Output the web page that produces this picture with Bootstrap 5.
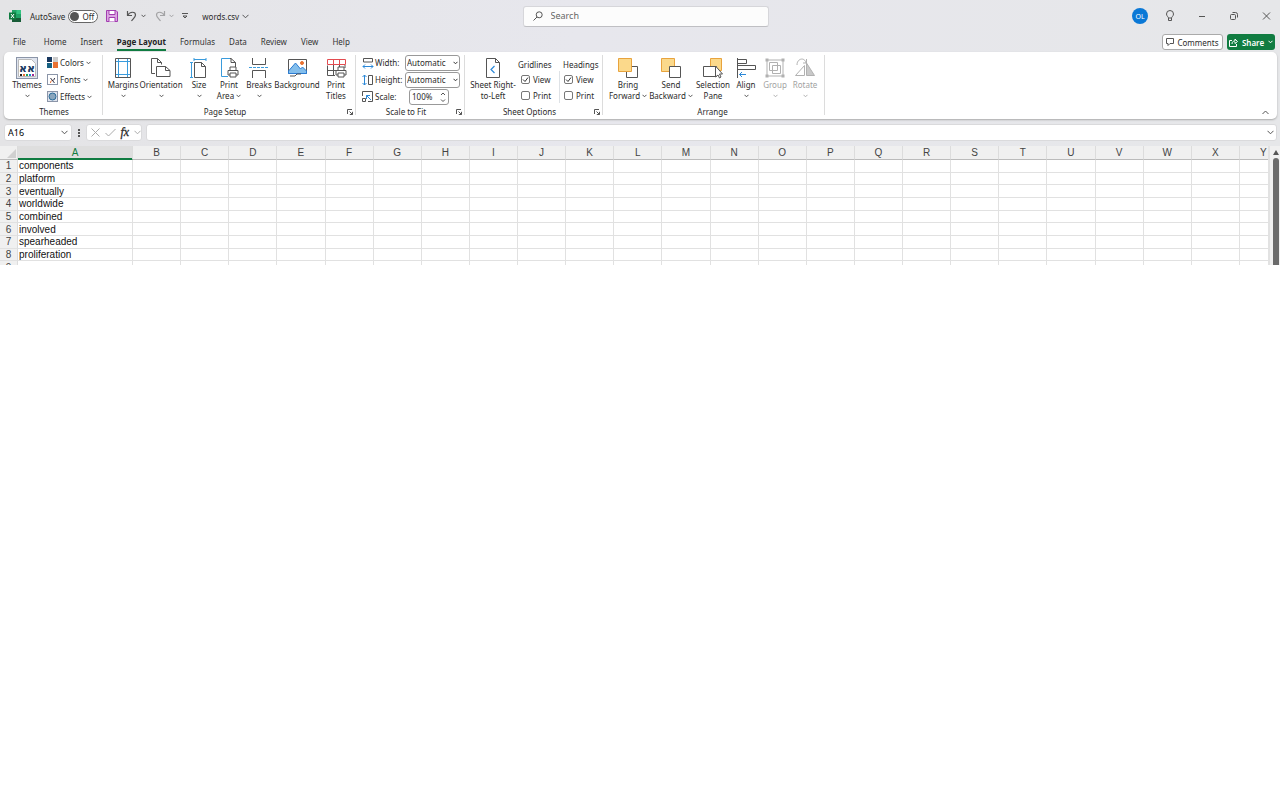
<!DOCTYPE html>
<html lang="en">
<head>
<meta charset="utf-8">
<meta name="viewport" content="width=device-width, initial-scale=1">
<title>words.csv</title>
<link rel="stylesheet" href="https://cdn.jsdelivr.net/npm/bootstrap@5.3.0/dist/css/bootstrap.min.css">
<style>
:root{--ink:#2b2b2b;--green:#107c41;--line:#e1e1e1}
body{font-family:"Noto Sans","Open Sans",sans-serif;font-size:8px;line-height:11px;color:var(--ink);background:#fff}
button{border:0;background:none;padding:0;color:inherit;font:inherit}
svg{display:block;fill:none;stroke:#555;stroke-width:1;flex:none}
.solid{stroke:none}
.pale{stroke:#aaa}
.window-frame{background:linear-gradient(90deg,#e4e4e6,#e7e7ed 45%,#e6e7e9)}
.title-bar{height:32px}
.title-side{flex:1 1 0}
.quick{padding-left:9px;gap:8px}
.save-label{padding-left:1px}
.save-switch{width:30px;height:13px;border:1px solid #666;border-radius:7px;background:#fff;padding:0 3px 0 1px;margin-left:-5px}
.save-switch i{width:9px;height:9px;border-radius:50%;background:#555}
.drop{gap:3px}
.doc-name{margin-left:6px;gap:3px}
.search-box{width:246px;height:21px;background:#fcfcfc;border:1px solid #d6d6da;border-bottom-color:#bfbfc3;border-radius:3px;padding:0 9px;margin-left:10px}
.search-box input{border:0;background:none;font-size:9px;line-height:12px;outline:0;padding:0}
.search-box input::placeholder{color:#666;opacity:1}
.win-tools{gap:20px;padding-right:8px}
.avatar{width:16px;height:16px;border-radius:50%;background:#0a78d6;color:#fff;font-size:7px;margin-right:-4px}
.tab-bar{height:20px;padding:0 5px 0 13px}
.tabs{gap:14px}
.tabs a:first-child{margin-right:4px}
.tab-bar a{color:#333;text-decoration:none;line-height:14px;border-bottom:2px solid transparent;padding-top:1px}
.tab-bar a.current{font-weight:700;border-color:var(--green);color:#222}
.comments{height:16px;width:61px;background:#fff;border:1px solid #aaa;border-radius:3px;gap:3px}
.share{height:16px;width:48px;background:var(--green);color:#fff;border-radius:3px;font-weight:600}
.share svg{stroke:#fff}
.ribbon{margin:0 3px 0 4px;height:67px;background:#fff;border-radius:5px;box-shadow:0 1px 2px #aaa}
.group{padding-top:2px}
.group-body{height:52px}
.group-foot{height:11px;padding-right:2px}
.g-themes{width:98px}.g-setup{width:252px}.g-scale{width:108px}.g-sheet{width:137px}.g-arrange{width:221px}
.g-themes .group-body,.g-scale .group-body{padding-left:6px;gap:3px}
.g-themes .group-foot{padding-left:4px}
.g-setup .group-body{padding-left:4px}
.rule{width:1px;height:60px;margin-top:3px;background:#dcdcdc}
.big{text-align:center;display:flex;flex-direction:column;align-items:center;white-space:nowrap;padding-top:3px}
.big svg.ico{width:22px;height:22px}
.big .chev{margin:4px auto 0}
.chev-in{display:inline-block;margin:0 0 1px 2px}
.w26{width:26px}.w28{width:28px}.w32{width:32px}.w34{width:34px}.w40{width:40px}.w42{width:42px}.w44{width:44px}.w48{width:48px}
.aleph{font:700 11px "DejaVu Sans",sans-serif;fill:#17375e;stroke:none}
.faded{opacity:.45}
.small-row{height:17px;gap:2px}
.scale-row{height:17px;gap:1px}
.scale-row label{width:29px}
.field{height:16px;border:1px solid #999;border-radius:3px;background:#fff;font-size:8px;line-height:12px;color:var(--ink);padding:0 1px}
select.field{width:55px;appearance:none;background:#fff url("data:image/svg+xml,%3Csvg xmlns='http://www.w3.org/2000/svg' width='5' height='4' fill='none' stroke='%23333'%3E%3Cpath d='M.5.8l2 2 2-2'/%3E%3C/svg%3E") no-repeat right 1px center}
.spin{width:40px;margin-left:4px;padding-left:2px}
.spin input{width:28px;border:0;padding:0;outline:0;font-size:8px;line-height:12px;color:inherit}
.tick-head{padding-top:5px;padding-left:1px;margin-bottom:1px}
.tick{height:16px;gap:3px}
.tick input{appearance:none;width:9px;height:9px;margin:0;border:1px solid #777;border-radius:2px;background:#fff}
.tick input:checked{background:#fff url("data:image/svg+xml,%3Csvg xmlns='http://www.w3.org/2000/svg' width='7' height='7' fill='none' stroke='%23333'%3E%3Cpath d='M1 3.5l2 2 3-4'/%3E%3C/svg%3E") center no-repeat}
.formula-row{padding:5px 3px 5px 4px;height:27px;gap:4px}
.cellbox{height:17px;background:#fff;border:1px solid #dadadc;border-radius:3px}
.name-box{width:68px;padding:0 3px}
.name-box input,.entry input{border:0;outline:0;padding:0;background:none;font-size:9px;line-height:12px;min-width:0}
.entry{padding:0 2px}
.fn{width:56px}
.fx{font-family:"Liberation Serif",serif;font-style:italic;font-size:12px;-webkit-text-stroke:.3px}
.sheet{height:119px;background:#fff}
.sheet-view{overflow:hidden;height:119px}
.cells{table-layout:fixed;border-collapse:separate;border-spacing:0;width:calc(100% + 20px);height:128px;font-family:"Liberation Sans",sans-serif;font-size:10px;line-height:11px;color:#111}
.cells th{font-weight:400;text-align:center;background:#f0f0f0;color:#444;padding:0;border-right:1px solid #dcdcdc;border-bottom:1px solid var(--line)}
.cells thead th{height:14px;border-bottom-color:#bbb;line-height:12px;padding-top:1px}
.cells thead th.picked{background:#dedede;color:var(--green);box-shadow:inset 0 -1px var(--green);border-bottom-color:var(--green)}
.cells td{padding:0 1px;border-right:1px solid var(--line);border-bottom:1px solid var(--line);white-space:nowrap}
.col-head{width:18px}.col-a{width:115px}
.corner svg{margin-left:7px}
.scroller{width:12px;background:#f0f0f0;border-left:2px solid #e2e2e2;padding:4px 1px 0 3px}
.scroller i{width:6px;background:#6b6b6b;border-radius:3px 3px 0 0;margin-top:3px}
</style>
</head>
<body>
<svg width="0" height="0" class="position-absolute" aria-hidden="true">
  <symbol id="down" viewBox="0 0 5 4"><path d="M.5.8l2 2 2-2"/></symbol>
  <symbol id="down-wide" viewBox="0 0 7 5"><path d="M.5.8l3 3 3-3"/></symbol>
  <symbol id="launch" viewBox="0 0 6 6"><path d="M.5 5V.5H5M2.5 2.5l3 3M5.5 2.8v2.7H2.8"/></symbol>
  <symbol id="printer" viewBox="0 0 12 12"><path fill="#fff" d="M3 4V1h6v3M3 9H1V4.5h10V9H9M3 7h6v4H3z"/></symbol>
</svg>
<div class="window-frame">
  <header class="title-bar d-flex align-items-center">
    <div class="title-side quick d-flex align-items-center">
      <svg class="solid" width="12" height="12" viewBox="0 0 12 12"><path fill="#21a366" d="M3 0h9v12H3z"/><path fill="#33c481" d="M7.5 0H12v4H7.5z"/><path fill="#185c37" d="M3 8h9v4H3z"/><path fill="#107c41" d="M0 2.500h7v7H0z"/><path stroke="#fff" d="M2 4l3 4M5 4L2 8"/></svg>
      <span class="save-label">AutoSave</span>
      <button class="save-switch d-flex align-items-center justify-content-between" aria-label="AutoSave"><i></i><span>Off</span></button>
      <button aria-label="Save"><svg width="12" height="12" viewBox="0 0 12 12"><g stroke="#a23db0"><path fill="#dca6e2" d="M.5.5H10l1.500 1.500v9.500H.5z"/><path fill="#fff" d="M3 .5h6v4H3zM3 11.500v-4h6v4"/></g></svg></button>
      <button class="drop d-flex align-items-center" aria-label="Undo"><svg width="12" height="12" viewBox="0 0 12 12"><path stroke-width="1.200" d="M1.500 1v4.500H6M1.500 5.500C4 1 9.500 1.500 9.500 5c0 2-2 3.500-4 6"/></svg><svg width="5" height="4"><use href="#down"/></svg></button>
      <button class="drop d-flex align-items-center faded" aria-label="Redo"><svg width="12" height="12" viewBox="0 0 12 12"><path stroke-width="1.200" d="M10.500 1v4.500H6M10.500 5.500C8 1 2.500 1.500 2.500 5c0 2 2 3.500 4 6"/></svg><svg width="5" height="4"><use href="#down"/></svg></button>
      <button aria-label="Customize toolbar"><svg width="6" height="6" viewBox="0 0 6 6"><path d="M0 .5h6M1 3l2 2 2-2z"/></svg></button>
      <button class="doc-name d-flex align-items-center">words.csv<svg width="7" height="5"><use href="#down-wide"/></svg></button>
    </div>
    <label class="search-box d-flex align-items-center gap-2"><svg width="10" height="10" viewBox="0 0 10 10"><circle cx="6.200" cy="3.800" r="3"/><path d="M4 6L.5 9.500"/></svg><input type="search" placeholder="Search" aria-label="Search"></label>
    <div class="title-side win-tools d-flex align-items-center justify-content-end">
      <span class="avatar d-flex align-items-center justify-content-center">OL</span>
      <button aria-label="Tips"><svg width="12" height="14" viewBox="1 0 12 14"><path d="M5.500 9C5.500 8 3.500 7 3.500 5a3.500 3.500 0 0 1 7 0C10.500 7 8.500 8 8.500 9zM5.500 9v2.500h3V9"/></svg></button>
      <button aria-label="Minimize"><svg width="12" height="10" viewBox="0 0 12 10"><path d="M3 5.500h6"/></svg></button>
      <button aria-label="Restore"><svg width="12" height="10" viewBox="0 0 12 10"><rect x="2.500" y="3.500" width="5" height="5" rx="1"/><path d="M4.500 1.500h3q2 0 2 2v3"/></svg></button>
      <button aria-label="Close"><svg width="12" height="10" viewBox="0 0 12 10"><path d="M3 1.500l7 7M10 1.500l-7 7"/></svg></button>
    </div>
  </header>

  <nav class="tab-bar d-flex align-items-center">
    <div class="d-flex flex-grow-1 tabs">
      <a href="#">File</a><a href="#">Home</a><a href="#">Insert</a><a href="#" class="current">Page Layout</a><a href="#">Formulas</a><a href="#">Data</a><a href="#">Review</a><a href="#">View</a><a href="#">Help</a>
    </div>
    <button class="comments d-flex align-items-center justify-content-center"><svg width="8" height="8" viewBox="0 0 8 8"><path d="M.5.5h7v5H4l-2 2v-2H.5z"/></svg>Comments</button>
    <button class="share d-flex align-items-center justify-content-center ms-1"><svg width="9" height="9" viewBox="0 0 9 9"><path d="M3 2.500H.5v6h7V6M3 6c0-2 1-3 3-3V1l2.500 2.500L6 5.500V4"/></svg><span class="mx-1">Share</span><svg width="5" height="4"><use href="#down"/></svg></button>
  </nav>

  <section class="ribbon d-flex">
    <div class="group g-themes">
      <div class="group-body d-flex">
        <button class="big w34"><svg class="ico" viewBox="0 0 22 22"><rect x=".5" y=".5" width="21" height="21" fill="#dfe4ee" stroke="#8b95a8"/><path d="M2.500 2.500h13l4 4v13h-17z" fill="#fff" stroke="#bbb"/><text class="aleph" x="3" y="15">אא</text><path d="M4 18h2" stroke="#222" stroke-width="2"/><path d="M7 18h2" stroke="#e97132" stroke-width="2"/><path d="M10 18h2" stroke="#19a35b" stroke-width="2"/><path d="M13 18h2" stroke="#1587d4" stroke-width="2"/><path d="M16 18h2" stroke="#a02b93" stroke-width="2"/></svg>Themes<svg class="chev" width="5" height="4"><use href="#down"/></svg></button>
        <div>
          <button class="small-row d-flex align-items-center"><svg class="solid" width="11" height="11" viewBox="0 0 11 11"><path fill="#17375e" d="M0 0h5v5H0z"/><path fill="#ccc" d="M6 0h5v5H6z"/><path fill="#156082" d="M0 6h5v5H0z"/><path fill="#e97132" d="M6 5h5v6H6z"/></svg><span>Colors<svg class="chev-in" width="5" height="4"><use href="#down"/></svg></span></button>
          <button class="small-row d-flex align-items-center"><svg width="11" height="11" viewBox="0 0 11 11"><rect x=".5" y=".5" width="10" height="10" stroke="#8b95a8"/><path d="M3.500 4l4 5M7.500 4c0 2-1 2-2 2.500" stroke="#334"/><path d="M5 6.500c-1 .5-1.500 1-1.500 2.500" stroke="#e97132"/></svg><span>Fonts<svg class="chev-in" width="5" height="4"><use href="#down"/></svg></span></button>
          <button class="small-row d-flex align-items-center"><svg width="11" height="11" viewBox="0 0 11 11"><rect x=".5" y=".5" width="10" height="10" fill="#dfe4ee" stroke="#8b95a8"/><circle cx="5.500" cy="5.500" r="3.500" fill="#8aa6bd" stroke="#2b6c99"/></svg><span>Effects<svg class="chev-in" width="5" height="4"><use href="#down"/></svg></span></button>
        </div>
      </div>
      <div class="group-foot text-center">Themes</div>
    </div>
    <div class="rule"></div>

    <div class="group g-setup">
      <div class="group-body d-flex">
        <button class="big w32"><svg class="ico" viewBox="0 0 22 22"><path d="M3.500 1.500h15v19h-15z"/><path stroke="#3a9bdc" d="M6.500 2v18M15.500 2v18M4 4.500h14M4 17.500h14"/></svg>Margins<svg class="chev" width="5" height="4"><use href="#down"/></svg></button>
        <button class="big w44"><svg class="ico" viewBox="0 0 22 22"><path d="M5 16.500H1.500v-15h6l4 4v2M7.500 1.500v4h4M6.500 9.500h9l4.500 4v6H6.500zM15.500 9.500v4H20"/></svg>Orientation<svg class="chev" width="5" height="4"><use href="#down"/></svg></button>
        <button class="big w32"><svg class="ico" viewBox="0 0 22 22"><path d="M6.500 5.500h7l4 4v11h-11zM13.500 5.500v4h4"/><path stroke="#3a9bdc" d="M6 2.500h12M6 1v3M18 1v3M3.500 5v16M2 5.500h3M2 20.500h3"/></svg>Size<svg class="chev" width="5" height="4"><use href="#down"/></svg></button>
        <button class="big w28"><svg class="ico" viewBox="0 0 22 22"><path d="M5 1.500h8l4.500 4v5M13 1.500v4h4.500"/><path stroke="#3a9bdc" d="M12 1.500H3.500v18H10"/><use href="#printer" x="9" y="9" width="12" height="12"/></svg>Print<span>Area<svg class="chev-in" width="5" height="4"><use href="#down"/></svg></span></button>
        <button class="big w32"><svg class="ico" viewBox="0 0 22 22"><path d="M4.500 1v6.500h13V1M4.500 21v-7.500h13V21"/><path stroke="#3a9bdc" d="M1 10.500h20" stroke-dasharray="3 1"/></svg>Breaks<svg class="chev" width="5" height="4"><use href="#down"/></svg></button>
        <button class="big w44"><svg class="ico" viewBox="0 0 22 22"><path fill="#fff" d="M2.500 2.500h18v14h-18z"/><path fill="#83beec" stroke="#2b7cd3" d="M2.500 14l7-8 5 6 2-2 4 4v2.500h-18z"/><circle cx="16" cy="6" r="1.500" fill="#e97132" stroke="#e97132"/><path fill="#fff" d="M4 19h5l2-2h4"/></svg>Background</button>
        <button class="big w34"><svg class="ico" viewBox="0 0 22 22"><path d="M2.500 8.500v10H10M2.500 13.500H11M8.500 8v10M14.500 8v3M20 8v3"/><path stroke="#e34b50" fill="#fff" d="M2.500 2.500h18v5h-18zM8.500 3v5M14.500 3v5"/><use href="#printer" x="10" y="9" width="12" height="12"/></svg>Print<span>Titles</span></button>
      </div>
      <div class="group-foot d-flex"><span class="flex-grow-1 text-center">Page Setup</span><button aria-label="Page Setup options"><svg width="6" height="6"><use href="#launch"/></svg></button></div>
    </div>
    <div class="rule"></div>

    <div class="group g-scale">
      <div class="group-body">
        <div class="scale-row d-flex align-items-center"><svg width="12" height="12" viewBox="0 0 12 12"><path d="M1.500 4V1.500h9V5h-9z"/><path stroke="#2b88d8" d="M1 9.500h10M3 7.500l-2 2 2 2M9 7.500l2 2-2 2"/></svg><label for="wide">Width:</label><select id="wide" class="field"><option>Automatic</option></select></div>
        <div class="scale-row d-flex align-items-center"><svg width="12" height="12" viewBox="0 0 12 12"><path d="M6.500 1.500h4v9h-4z"/><path stroke="#2b88d8" d="M2.500 1v10M.5 3l2-2 2 2M.5 9l2 2 2-2"/></svg><label for="tall">Height:</label><select id="tall" class="field"><option>Automatic</option></select></div>
        <div class="scale-row d-flex align-items-center"><svg width="12" height="12" viewBox="0 0 12 12"><path d="M.5 5V.5h10v10H6M.5 7.500h3v3h-3z"/><path stroke="#2b88d8" d="M9 9L4.500 4.500M4.500 8V4.500H8"/></svg><label for="zoomed">Scale:</label><div class="field spin d-flex align-items-center"><input id="zoomed" type="text" value="100%"><svg width="6" height="12" viewBox="0 0 6 12"><path d="M1 4l2-2 2 2M1 8.500l2 2 2-2"/></svg></div></div>
      </div>
      <div class="group-foot d-flex"><span class="flex-grow-1 text-center">Scale to Fit</span><button aria-label="Scale options"><svg width="6" height="6"><use href="#launch"/></svg></button></div>
    </div>
    <div class="rule"></div>

    <div class="group g-sheet">
      <div class="group-body d-flex ps-1">
        <button class="big w48"><svg class="ico" viewBox="0 0 22 22"><path d="M4.500 1.500h9l4 4v15h-13zM13.500 1.500v4h4"/><path stroke="#2b88d8" stroke-width="1.200" d="M12.500 9L9 12.500l3.500 3.500"/></svg>Sheet Right-<span>to-Left</span></button>
        <div class="w42"><div class="tick-head">Gridlines</div>
          <label class="tick d-flex align-items-center ps-1"><input type="checkbox" checked>View</label><label class="tick d-flex align-items-center ps-1"><input type="checkbox">Print</label></div>
        <div class="w40"><div class="tick-head ms-1 ps-0">Headings</div>
          <label class="tick d-flex align-items-center border-start ps-1"><input type="checkbox" checked>View</label><label class="tick d-flex align-items-center border-start ps-1"><input type="checkbox">Print</label></div>
      </div>
      <div class="group-foot d-flex"><span class="flex-grow-1 text-center">Sheet Options</span><button aria-label="Sheet options"><svg width="6" height="6"><use href="#launch"/></svg></button></div>
    </div>
    <div class="rule"></div>

    <div class="group g-arrange">
      <div class="group-body d-flex ps-1">
        <button class="big w42"><svg class="ico" viewBox="0 0 22 22"><path fill="#fff" d="M9.500 9.500h11v11h-11z"/><path fill="#fbd98b" stroke="#e8a33d" d="M1.500 1.500h13v13h-13z"/></svg>Bring<span>Forward<svg class="chev-in" width="5" height="4"><use href="#down"/></svg></span></button>
        <button class="big w44"><svg class="ico" viewBox="0 0 22 22"><path fill="#fbd98b" stroke="#e8a33d" d="M1.500 1.500h13v13h-13z"/><path fill="#fff" d="M9.500 9.500h11v11h-11z"/></svg>Send<span>Backward<svg class="chev-in" width="5" height="4"><use href="#down"/></svg></span></button>
        <button class="big w40"><svg class="ico" viewBox="0 0 22 22"><path fill="#fbd98b" stroke="#e8a33d" d="M8.500 1.500h11v12h-11z"/><path fill="#fff" d="M1.500 9.500h13v10h-13z"/><path fill="#fff" d="M13.500 9v11l2.500-2 1.500 3 1.500-1-1.500-3h3z"/></svg>Selection<span>Pane</span></button>
        <button class="big w26"><svg class="ico" viewBox="0 0 22 22"><path d="M2.500 1v20M2.500 2.500h9v4h-9zM2.500 8.500h18v4h-18z"/><path stroke="#2b88d8" d="M11 17.500H4.500M7 15l-2.500 2.500L7 20"/></svg>Align<svg class="chev" width="5" height="4"><use href="#down"/></svg></button>
        <button class="big w32 faded" disabled><svg class="ico" viewBox="0 0 22 22"><path d="M3 3h16v16H3zM5.500 5.500h8v8h-8zM8.500 8.500h8v8h-8z"/><path stroke-width="3" stroke-dasharray="3 13" d="M1.500 3H21M1.500 19H21"/></svg>Group<svg class="chev" width="5" height="4"><use href="#down"/></svg></button>
        <button class="big w28 faded" disabled><svg class="ico" viewBox="0 0 22 22"><path d="M1.500 18.500h9v-10z"/><path d="M12.500 6v12.500h8z" fill="#888"/><path d="M3 8c0-7 8-8 9-2M12.500 2v4H9"/></svg>Rotate<svg class="chev" width="5" height="4"><use href="#down"/></svg></button>
      </div>
      <div class="group-foot text-center">Arrange</div>
    </div>
    <div class="rule"></div>
    <button class="ms-auto align-self-end p-1 me-1" aria-label="Collapse ribbon"><svg width="7" height="5" viewBox="0 0 7 5"><path d="M.5 4l3-3 3 3"/></svg></button>
  </section>

  <div class="formula-row d-flex">
    <div class="cellbox name-box d-flex align-items-center"><input class="flex-grow-1 w-75" aria-label="Name box" value="A16"><svg width="7" height="5"><use href="#down-wide"/></svg></div>
    <svg class="align-self-center" width="6" height="10" viewBox="0 0 6 10"><path stroke-width="2" stroke-dasharray="2 1" d="M3 1v8"/></svg>
    <div class="cellbox fn d-flex align-items-center justify-content-between ps-1"><svg class="pale" width="9" height="9" viewBox="0 0 9 9"><path d="M.5.5l8 8M8.500.5l-8 8"/></svg><svg class="pale" width="11" height="9" viewBox="0 0 11 9"><path d="M.5 5l3 3 7-7"/></svg><button class="fx">fx</button><svg class="pale" width="7" height="5"><use href="#down-wide"/></svg></div>
    <div class="cellbox entry flex-grow-1 d-flex align-items-center"><input class="flex-grow-1" aria-label="Formula"><svg width="7" height="5"><use href="#down-wide"/></svg></div>
  </div>
</div>

<main class="sheet d-flex">
  <div class="sheet-view flex-grow-1">
    <table class="cells">
      <colgroup><col class="col-head"><col class="col-a"></colgroup>
      <thead><tr id="letters"><th class="corner"><svg class="solid" width="9" height="9" viewBox="0 0 9 9"><path fill="#d0d0d0" d="M9 0v9H0z"/></svg></th></tr></thead>
      <tbody id="rows"></tbody>
    </table>
  </div>
  <div class="scroller d-flex flex-column align-items-center"><svg class="solid" width="6" height="5" viewBox="0 0 6 5"><path fill="#555" d="M3 0l3 5H0z"/></svg><i class="flex-grow-1"></i></div>
</main>

<script>
const letters = [..."ABCDEFGHIJKLMNOPQRSTUVWXY"];
const words = ["components","platform","eventually","worldwide","combined","involved","spearheaded","proliferation",""];
document.getElementById("letters").insertAdjacentHTML("beforeend",
  letters.map((l, i) => `<th scope="col"${i ? "" : ' class="picked"'}>${l}</th>`).join(""));
document.getElementById("rows").innerHTML = words.map((w, r) =>
  `<tr><th scope="row">${r + 1}</th>` + letters.map((l, i) => `<td>${i ? "" : w}</td>`).join("") + "</tr>").join("");
</script>
<script src="https://cdn.jsdelivr.net/npm/bootstrap@5.3.0/dist/js/bootstrap.bundle.min.js"></script>
</body>
</html>
